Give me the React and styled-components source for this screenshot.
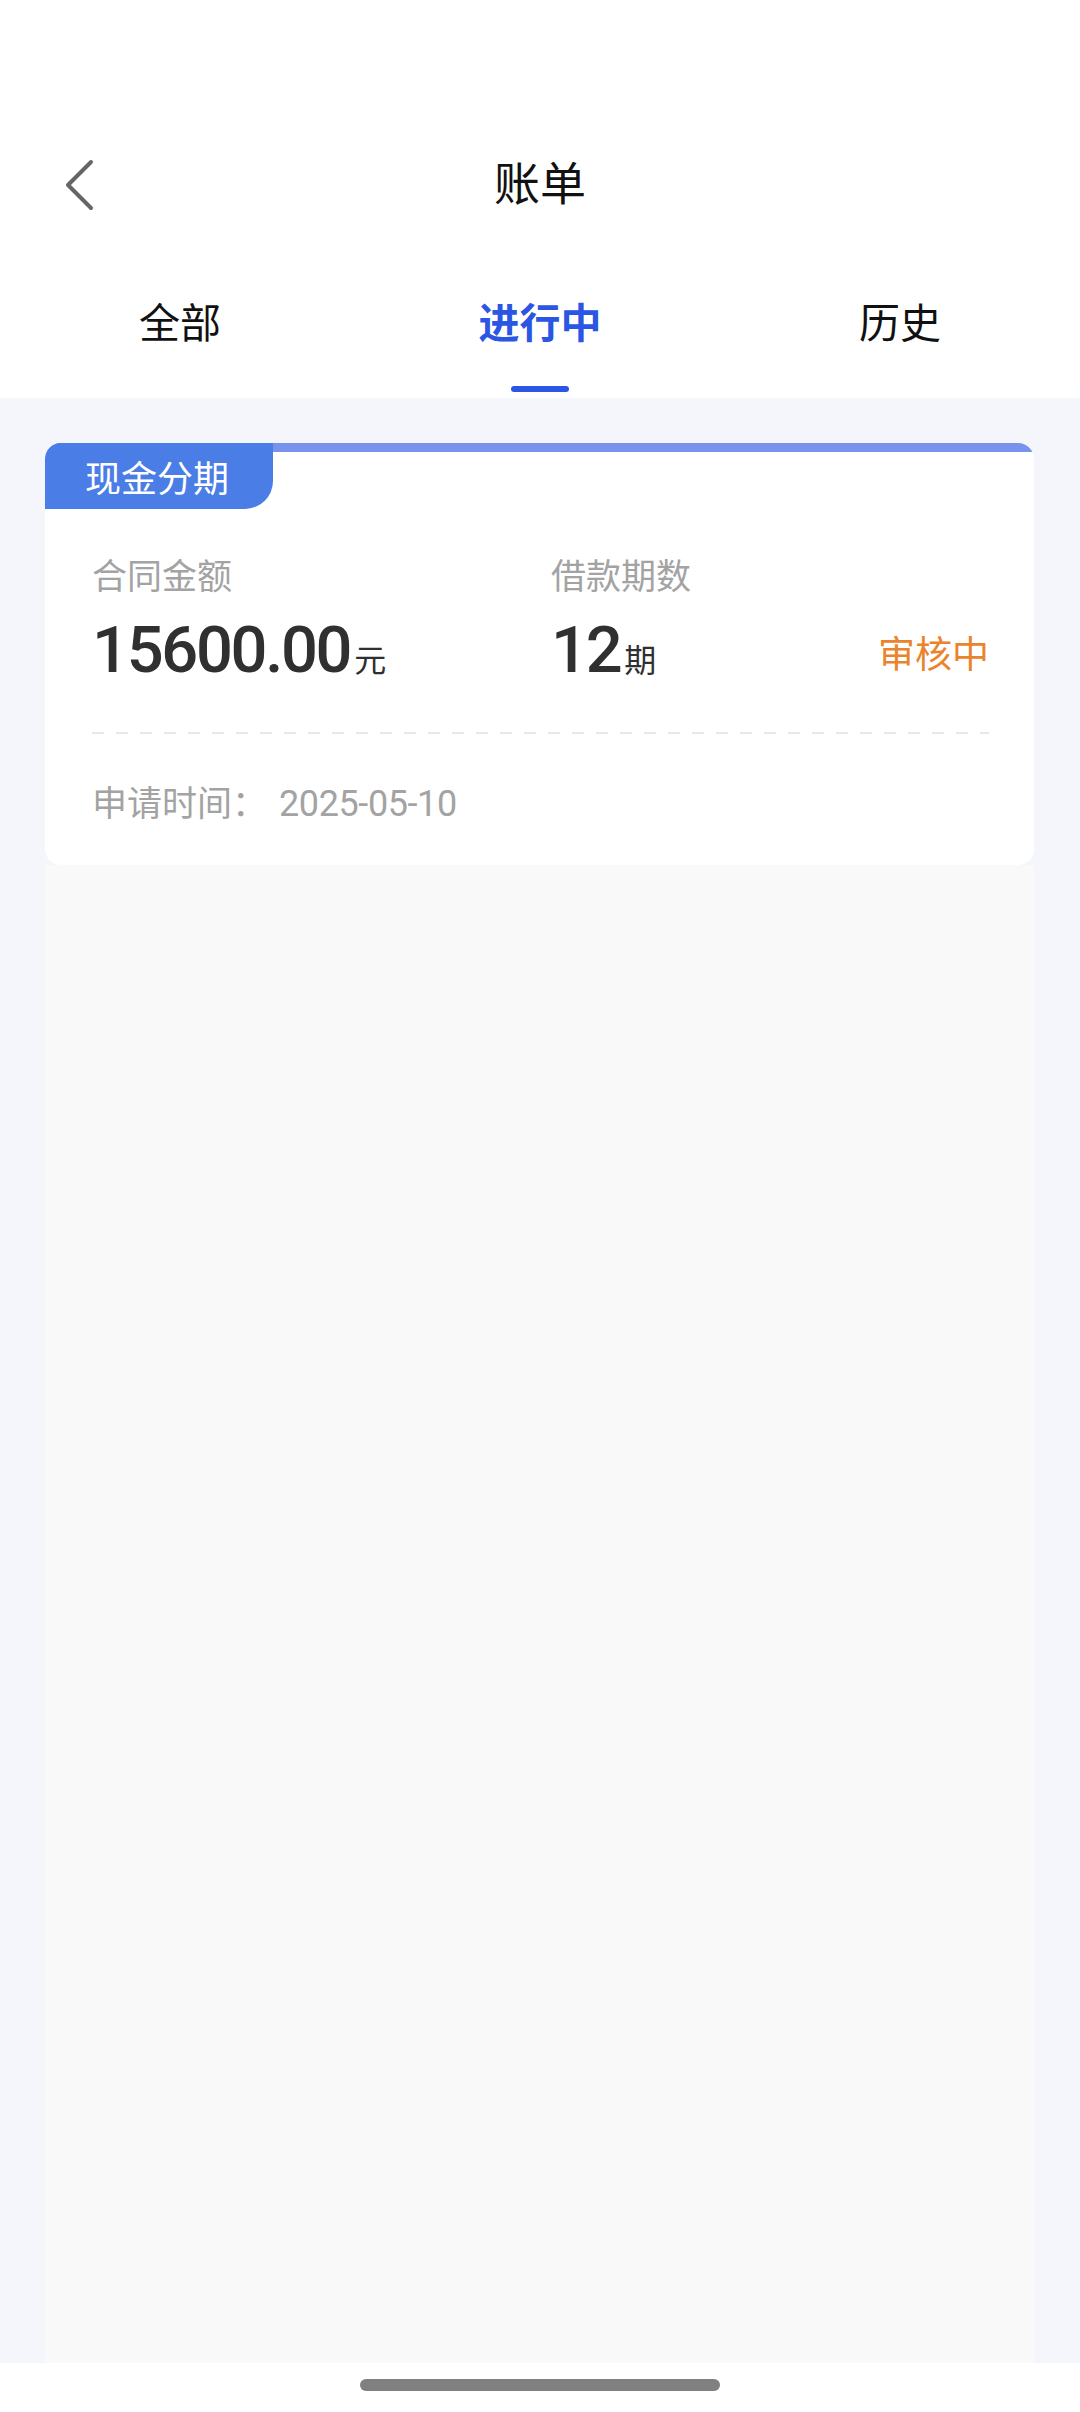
import React, { useState } from 'react';
import styled, { createGlobalStyle } from 'styled-components';

const GlobalStyle = createGlobalStyle`
    html, body {
        margin: 0;
        padding: 0;
        background: #ffffff;
    }
    body {
        font-family: "Noto Sans CJK SC", "Noto Sans", Roboto, sans-serif;
        -webkit-font-smoothing: antialiased;
    }
    * { box-sizing: border-box; }
`;

const Page = styled.div`
    width: 1080px;
    height: 2412px;
    display: flex;
    flex-direction: column;
    background: #ffffff;
`;

const Header = styled.header`
    background: #ffffff;
    padding-top: 142px;
`;

const NavBar = styled.div`
    height: 75px;
    display: grid;
    grid-template-columns: 1fr auto 1fr;
    align-items: center;
`;

const BackButton = styled.button`
    justify-self: start;
    margin-left: 62px;
    margin-top: 10px;
    width: 34px;
    height: 54px;
    padding: 0;
    border: none;
    background: transparent;
    display: flex;
    align-items: center;
    justify-content: center;
`;

const Title = styled.h1`
    margin: 0;
    font-size: 46px;
    font-weight: 400;
    color: #111111;
    line-height: 60px;
`;

const Tabs = styled.nav`
    display: grid;
    grid-template-columns: repeat(3, 1fr);
    height: 181px;
`;

const Tab = styled.div`
    padding-top: 73px;
    display: flex;
    flex-direction: column;
    align-items: center;
    font-size: 41px;
    line-height: 60px;
    font-weight: ${p => (p.$active ? 700 : 400)};
    color: ${p => (p.$active ? '#2b56e3' : '#111111')};
    cursor: pointer;
`;

const TabLine = styled.span`
    display: block;
    margin-top: 36px;
    width: 58px;
    height: 6px;
    border-radius: 3px;
    background: #2b56e3;
    visibility: ${p => (p.$active ? 'visible' : 'hidden')};
`;

const Body = styled.main`
    flex: 1;
    background: #f4f6fb;
    padding: 45px 46px 0 45px;
    display: flex;
    flex-direction: column;
`;

const Card = styled.div`
    background: linear-gradient(#7892ee 0 9px, #ffffff 9px);
    border-radius: 16px;
    overflow: hidden;
    padding-bottom: 37px;
`;

const Tag = styled.div`
    width: 228px;
    height: 66px;
    background: #4a7de6;
    border-bottom-right-radius: 28px;
    color: #ffffff;
    font-size: 36px;
    line-height: 66px;
    text-align: center;
    padding-right: 4px;
`;

const CardBody = styled.div`
    padding: 41px 45px 0 47px;
`;

const Stats = styled.div`
    display: grid;
    grid-template-columns: 459px 1fr auto;
    grid-template-rows: 48px auto;
    row-gap: 20px;
`;

const Label = styled.div`
    font-size: 35px;
    line-height: 48px;
    color: #a3a3a3;
`;

const Value = styled.div`
    display: flex;
    align-items: baseline;
    color: #303030;
`;

const Number = styled.span`
    font-family: Roboto, "Liberation Sans", sans-serif;
    font-size: 65px;
    line-height: 64px;
    font-weight: 500;
    letter-spacing: -2.3px;
`;

const Unit = styled.span`
    font-size: 32px;
    margin-left: 4px;
`;

const Status = styled.div`
    grid-column: 3;
    grid-row: 2;
    align-self: center;
    font-size: 37px;
    line-height: 48px;
    color: #ea842c;
    margin-top: 4px;
`;

const Dashed = styled.div`
    margin-top: 50px;
    height: 2px;
    background: repeating-linear-gradient(90deg, #e8e8e8 0 12px, transparent 12px 24px);
`;

const DateRow = styled.div`
    margin-top: 43px;
    font-size: 35px;
    line-height: 48px;
    color: #a3a3a3;
    display: flex;
    align-items: baseline;
`;

const DateText = styled.span`
    font-family: Roboto, "Liberation Sans", sans-serif;
    font-size: 36px;
    margin-left: 12px;
    letter-spacing: -0.4px;
`;

const ListRest = styled.div`
    flex: 1;
    background: #f9f9f9;
`;

const HomeArea = styled.div`
    height: 49px;
    background: #ffffff;
    display: flex;
    justify-content: center;
    padding-top: 16px;
`;

const HomeBar = styled.div`
    width: 360px;
    height: 12px;
    border-radius: 6px;
    background: #808080;
`;

const tabs = ['全部', '进行中', '历史'];

const App = () => {
    const [active, setActive] = useState(1);

    return (
        <Page>
            <GlobalStyle />
            <Header>
                <NavBar>
                    <BackButton aria-label="back">
                        <svg width="34" height="54" viewBox="0 0 34 54" fill="none">
                            <path d="M29 4 L6 27 L29 50" stroke="#666666" strokeWidth="4" strokeLinecap="round" strokeLinejoin="round" />
                        </svg>
                    </BackButton>
                    <Title>账单</Title>
                    <span />
                </NavBar>
                <Tabs>
                    {tabs.map((t, i) => (
                        <Tab key={t} $active={i === active} onClick={() => setActive(i)}>
                            {t}
                            <TabLine $active={i === active} />
                        </Tab>
                    ))}
                </Tabs>
            </Header>
            <Body>
                <Card>
                    <Tag>现金分期</Tag>
                    <CardBody>
                        <Stats>
                            <Label>合同金额</Label>
                            <Label>借款期数</Label>
                            <span />
                            <Value>
                                <Number>15600.00</Number>
                                <Unit>元</Unit>
                            </Value>
                            <Value>
                                <Number>12</Number>
                                <Unit>期</Unit>
                            </Value>
                            <Status>审核中</Status>
                        </Stats>
                        <Dashed />
                        <DateRow>
                            申请时间：
                            <DateText>2025-05-10</DateText>
                        </DateRow>
                    </CardBody>
                </Card>
                <ListRest />
            </Body>
            <HomeArea>
                <HomeBar />
            </HomeArea>
        </Page>
    );
};

export default App;
